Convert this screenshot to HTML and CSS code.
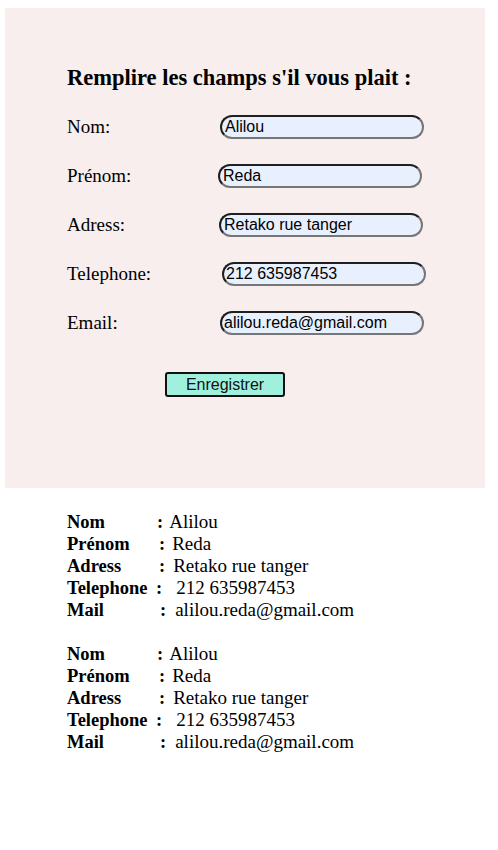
FILE: index.html
```html
<!DOCTYPE html>
<html>
<head>
<meta charset="utf-8">
<link rel="stylesheet" href="styles.css">
</head>
<body>
<div class="panel">
  <h3 class="title">Remplire les champs s'il vous plait :</h3>
  <div class="row"><span class="lbl">Nom:</span><span class="field f-nom">Alilou</span></div>
  <div class="row"><span class="lbl">Prénom:</span><span class="field f-prenom">Reda</span></div>
  <div class="row"><span class="lbl">Adress:</span><span class="field f-adr">Retako rue tanger</span></div>
  <div class="row"><span class="lbl">Telephone:</span><span class="field f-tel">212 635987453</span></div>
  <div class="row"><span class="lbl">Email:</span><span class="field f-mail">alilou.reda@gmail.com</span></div>
  <div class="actions"><button class="btn">Enregistrer</button></div>
</div>
<div class="list">
  <div class="card">
    <div class="line"><b class="k k-nom">Nom</b><b class="c">:</b><span class="v v-nom">Alilou</span></div>
    <div class="line"><b class="k k-pre">Prénom</b><b class="c">:</b><span class="v v-pre">Reda</span></div>
    <div class="line"><b class="k k-adr">Adress</b><b class="c">:</b><span class="v v-adr">Retako rue tanger</span></div>
    <div class="line"><b class="k k-tel">Telephone</b><b class="c">:</b><span class="v v-tel">212 635987453</span></div>
    <div class="line"><b class="k k-mail">Mail</b><b class="c">:</b><span class="v v-mail">alilou.reda@gmail.com</span></div>
  </div>
  <div class="card">
    <div class="line"><b class="k k-nom">Nom</b><b class="c">:</b><span class="v v-nom">Alilou</span></div>
    <div class="line"><b class="k k-pre">Prénom</b><b class="c">:</b><span class="v v-pre">Reda</span></div>
    <div class="line"><b class="k k-adr">Adress</b><b class="c">:</b><span class="v v-adr">Retako rue tanger</span></div>
    <div class="line"><b class="k k-tel">Telephone</b><b class="c">:</b><span class="v v-tel">212 635987453</span></div>
    <div class="line"><b class="k k-mail">Mail</b><b class="c">:</b><span class="v v-mail">alilou.reda@gmail.com</span></div>
  </div>
</div>
</body>
</html>
```
FILE: styles.css
```css
html, body {
  margin: 0;
  padding: 0;
  background: #ffffff;
  color: #000;
  font-family: "Liberation Serif", "Times New Roman", serif;
}
.panel {
  box-sizing: border-box;
  margin: 8px 0 0 5px;
  width: 480px;
  height: 480px;
  background: #f8eeed;
  padding: 57px 0 0 62px;
}
.title {
  margin: 0 0 24px 0;
  font-size: 22.5px;
  font-weight: bold;
  line-height: 26px;
}
.row {
  display: flex;
  align-items: center;
  height: 24px;
  margin-bottom: 25px;
}
.lbl {
  font-size: 19px;
  width: 153px;
  flex: none;
}
.field {
  box-sizing: border-box;
  width: 204px;
  height: 24px;
  border: 2px solid;
  border-color: #1f1f1f #767676 #767676 #1f1f1f;
  border-radius: 12px;
  background: #e8f0fe;
  font-family: "Liberation Sans", Arial, sans-serif;
  font-size: 16px;
  line-height: 20px;
  padding: 0 0 0 3px;
  white-space: nowrap;
  overflow: hidden;
}
.f-prenom { margin-left: -2px; }
.f-adr { margin-left: -1px; }
.f-tel { margin-left: 2px; padding-left: 2px; }
.f-mail { padding-left: 2px; }
.actions {
  padding: 12px 0 0 98px;
}
.btn {
  box-sizing: border-box;
  width: 120px;
  height: 25px;
  background: #a0f0de;
  border: 2px solid #111;
  border-radius: 3px;
  font-family: "Liberation Sans", Arial, sans-serif;
  font-size: 16px;
  color: #111;
  padding: 0;
}
.list {
  padding: 23px 0 0 67px;
}
.card {
  margin-bottom: 22px;
}
.line {
  font-size: 19px;
  line-height: 22px;
  white-space: nowrap;
  display: flex;
  align-items: baseline;
}
.k {
  display: inline-block;
  font-size: 18.5px;
  flex: none;
}
.k-nom { width: 90px; }
.k-pre { width: 92px; }
.k-adr { width: 92px; }
.k-tel { width: 89px; }
.k-mail { width: 93px; }
.c { display: inline-block; font-size: 18.5px; }
.v-nom { margin-left: 6px; }
.v-pre { margin-left: 7px; }
.v-adr { margin-left: 8px; }
.v-tel { margin-left: 14px; }
.v-mail { margin-left: 9px; }
```
